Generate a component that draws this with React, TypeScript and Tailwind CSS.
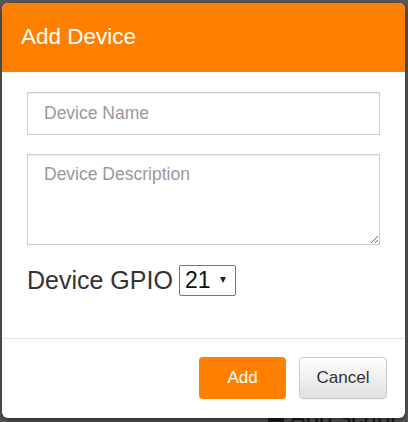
import { useState } from 'react';

const gpioPins = [4, 5, 12, 13, 14, 15, 16, 17, 18, 19, 21, 22, 23];

function AddDeviceModal() {
    const [name, setName] = useState('');
    const [description, setDescription] = useState('');
    const [gpio, setGpio] = useState(21);

    return (
        <div className="relative z-10 ml-[2px] mt-[3px] flex h-[415px] w-[403px] flex-col overflow-hidden rounded-md bg-white shadow-[0_3px_9px_rgba(0,0,0,0.5)]">
            <div className="flex h-[69px] items-center bg-[#ff8000] pl-[19px]">
                <h4 className="text-[22.5px] leading-none text-white">Add Device</h4>
            </div>
            <div className="flex flex-1 flex-col px-[25px] pt-[20px]">
                <input
                    value={name}
                    onChange={(e) => setName(e.target.value)}
                    placeholder="Device Name"
                    className="h-[43px] w-full border border-[#cccccc] px-[16px] text-[17.5px] text-[#555] shadow-[inset_0_1px_1px_rgba(0,0,0,0.075)] outline-none placeholder:text-[#999]"
                />
                <textarea
                    value={description}
                    onChange={(e) => setDescription(e.target.value)}
                    placeholder="Device Description"
                    className="mt-[19px] h-[91px] w-full border border-[#cccccc] px-[16px] pt-[7px] text-[17.5px] leading-[25px] text-[#555] shadow-[inset_0_1px_1px_rgba(0,0,0,0.075)] outline-none placeholder:text-[#999]"
                />
                <div className="mt-[20px] flex items-center">
                    <span className="text-[25px] leading-none text-[#333]">Device GPIO</span>
                    <div className="relative ml-[6px]">
                        <select
                            value={gpio}
                            onChange={(e) => setGpio(Number(e.target.value))}
                            className="h-[31px] w-[57px] appearance-none rounded-[2px] border border-[#767676] bg-white pl-[5px] text-[23px] leading-none text-[#111] outline-none"
                        >
                            {gpioPins.map((pin) => (
                                <option key={pin} value={pin}>{pin}</option>
                            ))}
                        </select>
                        <span className="pointer-events-none absolute right-[10px] top-[12px] h-0 w-0 border-x-[3.5px] border-t-[6px] border-x-transparent border-t-[#222]"></span>
                    </div>
                </div>
            </div>
            <div className="flex justify-end gap-[13px] border-t border-[#e5e5e5] pb-[19px] pr-[18px] pt-[18px]">
                <button className="h-[42px] w-[87px] rounded-[4px] bg-[#ff8000] text-[17px] text-white">
                    Add
                </button>
                <button className="h-[42px] w-[88px] rounded-[4px] border border-[#cccccc] bg-gradient-to-b from-white to-[#e0e0e0] text-[17px] text-[#333] shadow-[0_1px_1px_rgba(0,0,0,0.05)]">
                    Cancel
                </button>
            </div>
        </div>
    );
}

export default function App() {
    return (
        <div className="relative h-[422px] w-[408px] overflow-hidden bg-[#595959] font-['Liberation_Sans',Arial,sans-serif]">
            <AddDeviceModal />
            <div className="absolute left-[268px] top-[405px] flex items-center gap-[6px] text-[24px] leading-none text-[#1a1a1a]">
                <span className="h-[16px] w-[16px] bg-[#1a1a1a]"></span>
                <span>Add script</span>
            </div>
        </div>
    );
}
